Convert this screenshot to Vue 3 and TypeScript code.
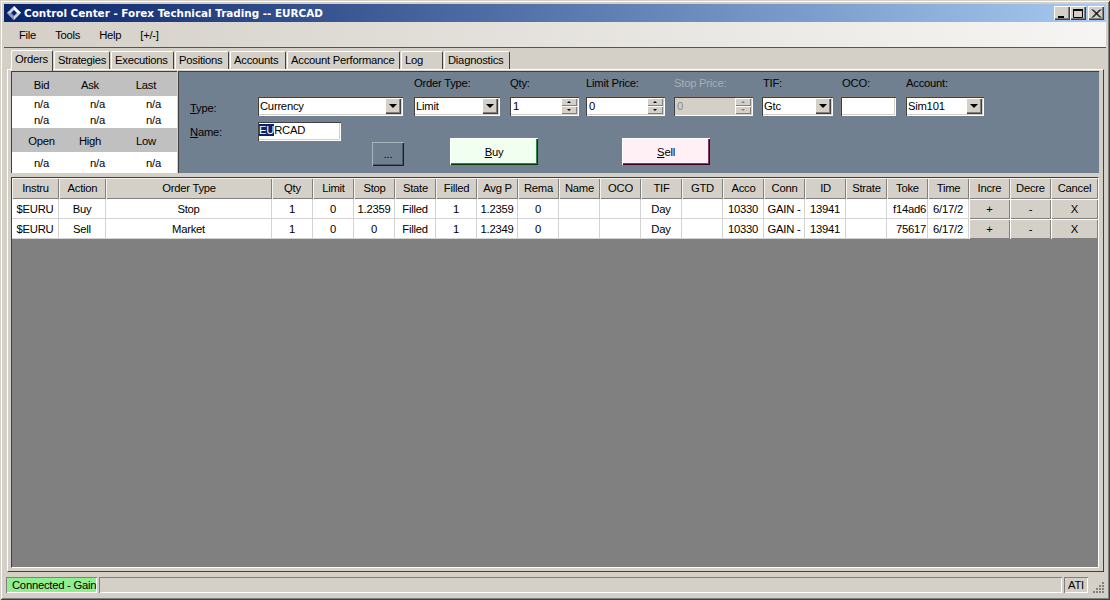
<script setup lang="ts">
const menus = ["File", "Tools", "Help", "[+/-]"];

const tabs = [
  { label: "Orders", width: 42 },
  { label: "Strategies", width: 56 },
  { label: "Executions", width: 63 },
  { label: "Positions", width: 54 },
  { label: "Accounts", width: 56 },
  { label: "Account Performance", width: 113 },
  { label: "Log", width: 42 },
  { label: "Diagnostics", width: 66 },
];

const columns = [
  "Instru", "Action", "Order Type", "Qty", "Limit", "Stop", "State", "Filled", "Avg P", "Rema", "Name", "OCO",
  "TIF", "GTD", "Acco", "Conn", "ID", "Strate", "Toke", "Time", "Incre", "Decre", "Cancel",
];

const rows = [
  ["$EURU", "Buy", "Stop", "1", "0", "1.2359", "Filled", "1", "1.2359", "0", "", "", "Day", "", "10330", "GAIN -", "13941", "", "f14ad6", "6/17/2"],
  ["$EURU", "Sell", "Market", "1", "0", "0", "Filled", "1", "1.2349", "0", "", "", "Day", "", "10330", "GAIN -", "13941", "", "75617", "6/17/2"],
];

const actions = ["+", "-", "X"];
</script>

<template>
  <div class="window">
    <header class="titlebar">
      <svg class="app-icon" width="16" height="16" viewBox="0 0 16 16">
        <path d="M8 1 15 8 8 15 1 8Z" fill="#c9d3e6" />
        <path d="M8 1 15 8H11L8 5Z" fill="#ffffff" />
        <path d="M1 8 8 15V11L5 8Z" fill="#8f9cb8" />
        <path d="M8 5 11 8 8 11 5 8Z" fill="#0a246a" />
      </svg>
      <span class="title-text">Control Center - Forex Technical Trading -- EURCAD</span>
      <div class="caption-buttons">
        <button class="caption-btn">
          <svg width="12" height="11" viewBox="0 0 12 11"><rect x="2" y="8" width="6" height="2" fill="#000" /></svg>
        </button>
        <button class="caption-btn">
          <svg width="12" height="11" viewBox="0 0 12 11"><path d="M1.5 2.5h9v7h-9z" fill="none" stroke="#000" /><rect x="1" y="1" width="10" height="2" /></svg>
        </button>
        <button class="caption-btn close">
          <svg width="12" height="11" viewBox="0 0 12 11"><path d="M2 1.5 10 9.5M3 1.5 11 9.5M10 1.5 2 9.5M11 1.5 3 9.5" stroke="#000" fill="none" /></svg>
        </button>
      </div>
    </header>

    <nav class="menubar">
      <span v-for="m in menus" :key="m" class="menu-item">{{ m }}</span>
    </nav>

    <div class="tabstrip">
      <div
        v-for="(t, i) in tabs"
        :key="t.label"
        class="tab"
        :class="{ active: i === 0 }"
        :style="{ width: t.width + 'px' }"
      >
        {{ t.label }}
      </div>
    </div>

    <main class="page">
      <section class="top">
        <div class="quotes">
          <div class="q-row head"><span>Bid</span><span>Ask</span><span>Last</span></div>
          <div class="q-vals">
            <div class="q-row val"><span>n/a</span><span>n/a</span><span>n/a</span></div>
            <div class="q-row val"><span>n/a</span><span>n/a</span><span>n/a</span></div>
          </div>
          <div class="q-row head"><span>Open</span><span>High</span><span>Low</span></div>
          <div class="q-vals last">
            <div class="q-row val"><span>n/a</span><span>n/a</span><span>n/a</span></div>
          </div>
        </div>

        <div class="entry">
          <label class="lbl col-3">Order Type:</label>
          <label class="lbl col-4">Qty:</label>
          <label class="lbl col-5">Limit Price:</label>
          <label class="lbl col-6 disabled">Stop Price:</label>
          <label class="lbl col-7">TIF:</label>
          <label class="lbl col-8">OCO:</label>
          <label class="lbl col-9">Account:</label>

          <label class="side-lbl"><u>T</u>ype:</label>
          <div class="field combo col-2 w-type"><span>Currency</span><i class="drop"><b></b></i></div>
          <div class="field combo col-3 w-order"><span>Limit</span><i class="drop"><b></b></i></div>
          <div class="field spin col-4 w-qty"><span>1</span><i class="spinner"><em class="up"></em><em class="down"></em></i></div>
          <div class="field spin col-5 w-price"><span>0</span><i class="spinner"><em class="up"></em><em class="down"></em></i></div>
          <div class="field spin col-6 w-price off"><span>0</span><i class="spinner"><em class="up"></em><em class="down"></em></i></div>
          <div class="field combo col-7 w-tif"><span>Gtc</span><i class="drop"><b></b></i></div>
          <div class="field col-8 w-oco"></div>
          <div class="field combo col-9 w-acct"><span>Sim101</span><i class="drop"><b></b></i></div>

          <label class="side-lbl name-lbl"><u>N</u>ame:</label>
          <div class="field w-name"><span><mark>EU</mark>RCAD</span></div>

          <button class="dots">...</button>
          <div class="trade">
            <button class="trade-btn buy"><u>B</u>uy</button>
            <button class="trade-btn sell"><u>S</u>ell</button>
          </div>
        </div>
      </section>

      <section class="grid-area">
        <div class="grid">
          <div v-for="c in columns" :key="c" class="th">{{ c }}</div>
          <template v-for="(r, ri) in rows" :key="ri">
            <div v-for="(v, ci) in r" :key="ci" class="td" :class="{ right: ci === 18 }">{{ v }}</div>
            <div v-for="a in actions" :key="a" class="td act"><button class="cell-btn">{{ a }}</button></div>
          </template>
        </div>
      </section>
    </main>

    <footer class="statusbar">
      <div class="panel connected">Connected - Gain</div>
      <div class="panel spacer"></div>
      <div class="panel ati">ATI</div>
      <svg class="grip" width="13" height="13" viewBox="0 0 13 13">
        <g fill="#808080">
          <rect x="10" y="2" width="2" height="2" /><rect x="7" y="5" width="2" height="2" /><rect x="10" y="5" width="2" height="2" />
          <rect x="4" y="8" width="2" height="2" /><rect x="7" y="8" width="2" height="2" /><rect x="10" y="8" width="2" height="2" />
          <rect x="1" y="11" width="2" height="2" /><rect x="4" y="11" width="2" height="2" /><rect x="7" y="11" width="2" height="2" /><rect x="10" y="11" width="2" height="2" />
        </g>
      </svg>
    </footer>
  </div>
</template>

<style>
html,
body {
  margin: 0;
  overflow: hidden;
}
</style>

<style scoped>
.window {
  box-sizing: border-box;
  width: 1110px;
  height: 600px;
  padding: 4px;
  display: flex;
  flex-direction: column;
  background: #d4d0c8;
  box-shadow: inset 1px 1px 0 #d4d0c8, inset -1px -1px 0 #404040, inset 2px 2px 0 #ffffff, inset -2px -2px 0 #808080;
  font-family: "Liberation Sans", Arial, sans-serif;
  font-size: 11.25px;
  letter-spacing: -0.25px;
  color: #000;
}

button {
  font: inherit;
  letter-spacing: inherit;
  color: inherit;
  padding: 0;
  margin: 0;
  border: 0;
}

.titlebar {
  height: 18px;
  flex: none;
  display: flex;
  align-items: center;
  padding: 0 2px;
  background: linear-gradient(90deg, #0a246a, #a6caf0);
  color: #fff;
}
.app-icon {
  flex: none;
  margin-right: 2px;
}
.title-text {
  font-family: "DejaVu Sans", sans-serif;
  font-weight: 700;
  font-size: 10.4px;
  letter-spacing: 0;
  white-space: nowrap;
}
.caption-buttons {
  margin-left: auto;
  display: flex;
}
.caption-btn {
  width: 16px;
  height: 14px;
  display: flex;
  align-items: center;
  justify-content: center;
  background: #d4d0c8;
  box-shadow: inset 1px 1px 0 #fff, inset -1px -1px 0 #404040, inset -2px -2px 0 #808080;
}
.caption-btn.close {
  margin-left: 2px;
}

.menubar {
  height: 25px;
  flex: none;
  display: flex;
  align-items: center;
  background: linear-gradient(90deg, #d4d0c8, #f6f5f3);
  border-bottom: 1px solid #555;
  padding-left: 15px;
}
.menu-item {
  margin-right: 19px;
}

.tabstrip {
  height: 21px;
  flex: none;
  display: flex;
  align-items: flex-end;
  padding-left: 7px;
}
.tab {
  box-sizing: border-box;
  height: 18px;
  margin-right: 1px;
  padding-left: 3px;
  line-height: 17px;
  white-space: nowrap;
  background: #d4d0c8;
  border-top: 1px solid #fff;
  border-left: 1px solid #fff;
  border-right: 1px solid #404040;
  border-radius: 2px 2px 0 0;
}
.tab.active {
  height: 21px;
  line-height: 17px;
  position: relative;
  z-index: 1;
  margin-bottom: -2px;
}

.page {
  flex: 1;
  min-height: 0;
  margin: 0 2px 0 3px;
  padding: 1px 4px 3px 3px;
  display: flex;
  flex-direction: column;
  border-top: 1px solid #fff;
  border-left: 1px solid #fff;
  border-right: 1px solid #404040;
  border-bottom: 1px solid #404040;
}

.top {
  height: 102px;
  flex: none;
  display: flex;
  gap: 1px;
}

.quotes {
  box-sizing: border-box;
  width: 166px;
  flex: none;
  display: flex;
  flex-direction: column;
  border-top: 1px solid #404040;
  border-left: 1px solid #404040;
}
.q-row {
  display: grid;
  text-align: center;
}
.q-row.head {
  height: 24px;
  line-height: 26px;
  grid-template-columns: 59px 38px 1fr;
  background: #c0c0c0;
}
.q-row.val {
  height: 16px;
  line-height: 16px;
  grid-template-columns: 59px 53px 1fr;
}
.q-row span:last-child {
  padding-left: 6px;
}
.q-vals {
  height: 32px;
  background: #fff;
}
.q-vals.last {
  flex: 1;
  padding-top: 3px;
}

.entry {
  flex: 1;
  box-sizing: border-box;
  background: #708090;
  padding: 4px 0 0 11px;
  display: grid;
  grid-template-columns: 67px 156px 96px 76px 88px 88px 79px 65px 79px 1fr;
  grid-template-rows: 20px 25px 20px 1fr;
  align-items: start;
  border-top: 1px solid #404040;
  border-left: 1px solid #404040;
}
.lbl {
  grid-row: 1;
  white-space: nowrap;
  line-height: 14px;
  padding-left: 1px;
}
.lbl.disabled {
  color: #a7aeb6;
}
.field {
  grid-row: 2;
}
.col-2 { grid-column: 2; }
.col-3 { grid-column: 3; }
.col-4 { grid-column: 4; }
.col-5 { grid-column: 5; }
.col-6 { grid-column: 6; }
.col-7 { grid-column: 7; }
.col-8 { grid-column: 8; }
.col-9 { grid-column: 9; }
.lbl.col-7,
.lbl.col-8 {
  padding-left: 2px;
}

.side-lbl {
  grid-column: 1;
  grid-row: 2;
  padding-top: 5px;
  line-height: 14px;
}
.side-lbl.name-lbl {
  grid-row: 3;
  padding-top: 4px;
}

.field {
  box-sizing: border-box;
  height: 20px;
  display: flex;
  align-items: center;
  background: #fff;
  padding-left: 4px;
  white-space: nowrap;
  box-shadow: inset 1px 1px 0 #808080, inset 2px 2px 0 #404040, inset -1px -1px 0 #fff, inset -2px -2px 0 #d4d0c8;
}
.field.combo {
  padding-left: 3px;
}
.field > span {
  flex: 1;
}
.field.off {
  background: #d4d0c8;
  color: #8a8a8a;
}
.w-type { width: 146px; }
.w-order { width: 87px; }
.w-qty { width: 70px; }
.w-price { width: 80px; }
.w-tif { width: 72px; }
.w-oco { width: 56px; }
.w-acct { width: 79px; }
.w-name {
  grid-column: 2;
  grid-row: 3;
  width: 84px;
  padding: 0 0 2px 2px;
}
mark {
  background: #0a246a;
  color: #fff;
}

.drop {
  width: 16px;
  height: 16px;
  margin-right: 2px;
  display: flex;
  align-items: center;
  justify-content: center;
  background: #d4d0c8;
  box-shadow: inset 1px 1px 0 #fff, inset -1px -1px 0 #404040, inset -2px -2px 0 #808080;
}
.drop b {
  width: 0;
  height: 0;
  border-left: 4px solid transparent;
  border-right: 4px solid transparent;
  border-top: 4px solid #000;
}
.spinner {
  width: 16px;
  height: 16px;
  margin-right: 2px;
  display: flex;
  flex-direction: column;
}
.spinner em {
  flex: 1;
  display: flex;
  align-items: center;
  justify-content: center;
  background: #d4d0c8;
  box-shadow: inset 1px 1px 0 #fff, inset -1px -1px 0 #808080;
}
.spinner em::before {
  content: "";
  border-left: 2px solid transparent;
  border-right: 2px solid transparent;
}
.spinner .up::before {
  border-bottom: 2px solid #000;
}
.spinner .down::before {
  border-top: 2px solid #000;
}
.off .spinner em::before {
  border-top-color: #808080;
  border-bottom-color: #808080;
}

.dots {
  grid-column: 2;
  grid-row: 4;
  justify-self: end;
  width: 32px;
  height: 24px;
  margin: 1px 9px 0 0;
  line-height: 24px;
  background: #708090;
  box-shadow: inset 1px 1px 0 #a9b3bc, inset -1px -1px 0 #14202c, inset -2px -2px 0 #4f5a66;
}
.trade {
  grid-column: 3 / -1;
  grid-row: 3 / 5;
  margin: 17px 0 0 37px;
  display: flex;
  gap: 84px;
}
.trade-btn {
  width: 88px;
  height: 27px;
}
.trade-btn.buy {
  background: #f0fff0;
  box-shadow: inset 1px 1px 0 #fff, inset -1px -1px 0 #00380a, inset -2px -2px 0 #2e8b43;
}
.trade-btn.sell {
  background: #fff0f5;
  box-shadow: inset 1px 1px 0 #fff, inset -1px -1px 0 #3a0020, inset -2px -2px 0 #8b3a5c;
}

.grid-area {
  flex: 1;
  min-height: 0;
  margin-top: 4px;
  background: #808080;
  border-top: 1px solid #404040;
  border-left: 1px solid #404040;
  border-bottom: 1px solid #fff;
  border-right: 1px solid #fff;
}
.grid {
  display: grid;
  grid-template-columns: 47px 47px 166px repeat(19, 41px) 47px;
  grid-template-rows: 21px;
  grid-auto-rows: 20px;
  background: #fff;
  text-align: center;
  white-space: nowrap;
}
.th {
  box-sizing: border-box;
  line-height: 20px;
  overflow: hidden;
  background: #d4d0c8;
  box-shadow: inset 1px 1px 0 #f4f3f0, inset -1px -1px 0 #808080;
}
.td {
  box-sizing: border-box;
  line-height: 20px;
  overflow: hidden;
  border-right: 1px solid #d3d3d3;
  border-bottom: 1px solid #d3d3d3;
}
.td.right {
  text-align: right;
  padding-right: 1px;
}
.td.act {
  border: 0;
}
.cell-btn {
  display: block;
  width: 100%;
  height: 20px;
  background: #d4d0c8;
  box-shadow: inset 1px 1px 0 #fff, inset -1px -1px 0 #808080;
}

.statusbar {
  height: 16px;
  flex: none;
  margin: 5px 0 3px 2px;
  display: flex;
  gap: 2px;
  align-items: stretch;
  position: relative;
  padding-right: 18px;
}
.panel {
  box-sizing: border-box;
  line-height: 16px;
  padding-left: 6px;
  white-space: nowrap;
  box-shadow: inset 1px 1px 0 #808080, inset -1px -1px 0 #fff;
}
.panel.connected {
  width: 91px;
  background: #90ee90;
}
.panel.spacer {
  flex: 1;
}
.panel.ati {
  width: 24px;
  padding-left: 4px;
}
.grip {
  position: absolute;
  right: 1px;
  bottom: 0;
}
</style>
